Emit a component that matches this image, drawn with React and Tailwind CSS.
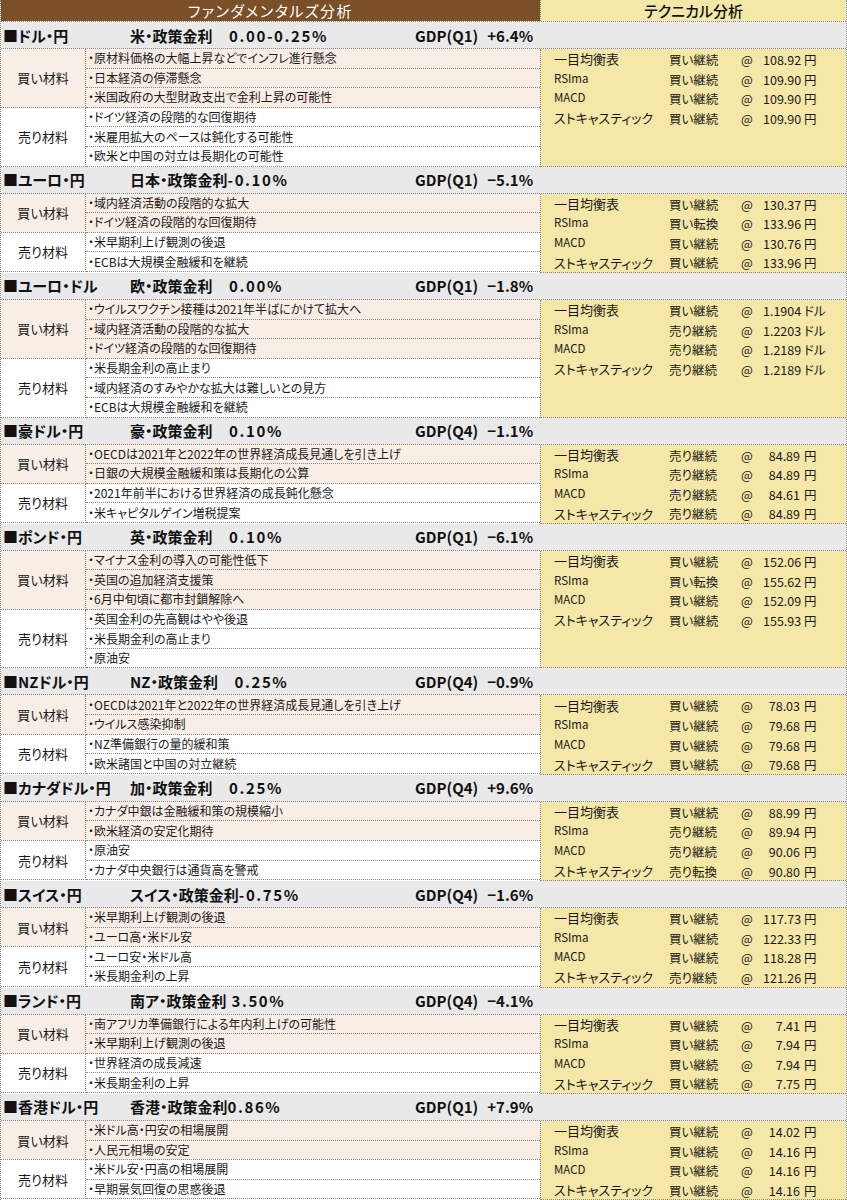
// SECTION: 為替 ファンダメンタルズ / テクニカル分析 表
const sections = [
  {
    pair: "■ドル・円",
    rate: "米・政策金利　0.00-0.25%",
    gdp: "GDP(Q1)　+6.4%",
    buy: ["・原材料価格の大幅上昇などでインフレ進行懸念", "・日本経済の停滞懸念", "・米国政府の大型財政支出で金利上昇の可能性"],
    sell: ["・ドイツ経済の段階的な回復期待", "・米雇用拡大のペースは鈍化する可能性", "・欧米と中国の対立は長期化の可能性"],
    unit: "円",
    tech: [["買い継続", "108.92"], ["買い継続", "109.90"], ["買い継続", "109.90"], ["買い継続", "109.90"]],
  },
  {
    pair: "■ユーロ・円",
    rate: "日本・政策金利-0.10%",
    gdp: "GDP(Q1)　−5.1%",
    buy: ["・域内経済活動の段階的な拡大", "・ドイツ経済の段階的な回復期待"],
    sell: ["・米早期利上げ観測の後退", "・ECBは大規模金融緩和を継続"],
    unit: "円",
    tech: [["買い継続", "130.37"], ["買い転換", "133.96"], ["買い継続", "130.76"], ["買い継続", "133.96"]],
  },
  {
    pair: "■ユーロ・ドル",
    rate: "欧・政策金利　0.00%",
    gdp: "GDP(Q1)　−1.8%",
    buy: ["・ウイルスワクチン接種は2021年半ばにかけて拡大へ", "・域内経済活動の段階的な拡大", "・ドイツ経済の段階的な回復期待"],
    sell: ["・米長期金利の高止まり", "・域内経済のすみやかな拡大は難しいとの見方", "・ECBは大規模金融緩和を継続"],
    unit: "ドル",
    tech: [["買い継続", "1.1904"], ["売り継続", "1.2203"], ["売り継続", "1.2189"], ["売り継続", "1.2189"]],
  },
  {
    pair: "■豪ドル・円",
    rate: "豪・政策金利　0.10%",
    gdp: "GDP(Q4)　−1.1%",
    buy: ["・OECDは2021年と2022年の世界経済成長見通しを引き上げ", "・日銀の大規模金融緩和策は長期化の公算"],
    sell: ["・2021年前半における世界経済の成長鈍化懸念", "・米キャピタルゲイン増税提案"],
    unit: "円",
    tech: [["売り継続", "84.89"], ["売り継続", "84.89"], ["売り継続", "84.61"], ["売り継続", "84.89"]],
  },
  {
    pair: "■ポンド・円",
    rate: "英・政策金利　0.10%",
    gdp: "GDP(Q1)　−6.1%",
    buy: ["・マイナス金利の導入の可能性低下", "・英国の追加経済支援策", "・6月中旬頃に都市封鎖解除へ"],
    sell: ["・英国金利の先高観はやや後退", "・米長期金利の高止まり", "・原油安"],
    unit: "円",
    tech: [["買い継続", "152.06"], ["買い転換", "155.62"], ["買い継続", "152.09"], ["買い継続", "155.93"]],
  },
  {
    pair: "■NZドル・円",
    rate: "NZ・政策金利　0.25%",
    gdp: "GDP(Q4)　−0.9%",
    buy: ["・OECDは2021年と2022年の世界経済成長見通しを引き上げ", "・ウイルス感染抑制"],
    sell: ["・NZ準備銀行の量的緩和策", "・欧米諸国と中国の対立継続"],
    unit: "円",
    tech: [["買い継続", "78.03"], ["買い継続", "79.68"], ["買い継続", "79.68"], ["買い継続", "79.68"]],
  },
  {
    pair: "■カナダドル・円",
    rate: "加・政策金利　0.25%",
    gdp: "GDP(Q4)　+9.6%",
    buy: ["・カナダ中銀は金融緩和策の規模縮小", "・欧米経済の安定化期待"],
    sell: ["・原油安", "・カナダ中央銀行は通貨高を警戒"],
    unit: "円",
    tech: [["買い継続", "88.99"], ["売り継続", "89.94"], ["売り継続", "90.06"], ["売り転換", "90.80"]],
  },
  {
    pair: "■スイス・円",
    rate: "スイス・政策金利-0.75%",
    gdp: "GDP(Q4)　−1.6%",
    buy: ["・米早期利上げ観測の後退", "・ユーロ高・米ドル安"],
    sell: ["・ユーロ安・米ドル高", "・米長期金利の上昇"],
    unit: "円",
    tech: [["買い継続", "117.73"], ["買い継続", "122.33"], ["買い継続", "118.28"], ["売り継続", "121.26"]],
  },
  {
    pair: "■ランド・円",
    rate: "南ア・政策金利 3.50%",
    gdp: "GDP(Q4)　−4.1%",
    buy: ["・南アフリカ準備銀行による年内利上げの可能性", "・米早期利上げ観測の後退"],
    sell: ["・世界経済の成長減速", "・米長期金利の上昇"],
    unit: "円",
    tech: [["買い継続", "7.41"], ["買い継続", "7.94"], ["買い継続", "7.94"], ["買い継続", "7.75"]],
  },
  {
    pair: "■香港ドル・円",
    rate: "香港・政策金利0.86%",
    gdp: "GDP(Q1)　+7.9%",
    buy: ["・米ドル高・円安の相場展開", "・人民元相場の安定"],
    sell: ["・米ドル安・円高の相場展開", "・早期景気回復の思惑後退"],
    unit: "円",
    tech: [["買い継続", "14.02"], ["買い継続", "14.16"], ["買い継続", "14.16"], ["買い継続", "14.16"]],
  },
];

const techNames = ["一目均衡表", "RSIma", "MACD", "ストキャスティック"];

function Group({ label, items, shaded }) {
  return (
    <div className={`flex ${shaded ? "bg-[#f8eee6]" : "bg-white"}`}>
      <div className="w-[85px] shrink-0 flex items-center justify-center text-[13px] border-r border-b border-dotted border-[#8a8a8a]">
        {label}
      </div>
      <div className="flex-1 flex flex-col">
        {items.map((t, i) => (
          <div
            key={i}
            className="h-[19.6px] flex items-center pl-[2px] text-[12px] border-b border-dotted border-[#8a8a8a] whitespace-nowrap overflow-hidden"
          >
            {t}
          </div>
        ))}
      </div>
    </div>
  );
}

function Section({ s }) {
  // split "米・政策金利　0.00-0.25%" into label and the numbers
  const m = s.rate.match(/^(.*?金利)(.*)$/);
  const gm = s.gdp.split("　");
  return (
    <div>
      {/* pair header */}
      <div className="h-[27px] flex items-center bg-[#e9e9e9] border-b border-dotted border-[#8a8a8a] text-[15px] font-bold text-[#111] whitespace-nowrap">
        <span className="w-[129px] pl-[2px]">{s.pair}</span>
        <span className="w-[285px]">
          {m[1]}
          <span className="tracking-[1.6px]">{m[2]}</span>
        </span>
        <span>{gm[0]}</span>
        <span className="ml-[9px]">{gm[1]}</span>
      </div>
      <div className="flex">
        <div className="w-[539px] shrink-0">
          <Group label="買い材料" items={s.buy} shaded />
          <Group label="売り材料" items={s.sell} />
        </div>
        {/* technical panel */}
        <div className="flex-1 bg-[#f4e7a7] border-l border-b border-dotted border-[#8a8a8a]">
          {s.tech.map(([sig, val], i) => (
            <div key={i} className="h-[19.6px] flex items-center text-[12.5px] whitespace-nowrap">
              <span className={`w-[128px] pl-[13px] ${i === 1 || i === 2 ? "text-[11.5px]" : "text-[13px]"}`}>
                {techNames[i]}
              </span>
              <span className="w-[72px] pt-[3px]">{sig}</span>
              <span className="w-[22px] pt-[3px]">@</span>
              <span className="w-[37px] text-right pt-[3px]">{val}</span>
              <span className="ml-[4px] pt-[3px]">{s.unit}</span>
            </div>
          ))}
        </div>
      </div>
    </div>
  );
}

export default function App() {
  return (
    <main className="w-[847px] bg-white text-[#1a1a1a] font-['Noto_Sans_CJK_JP','Liberation_Sans',sans-serif] [font-feature-settings:'palt'] leading-none border-l border-r border-dotted border-[#8a8a8a]">
      {/* top titles */}
      <div className="flex h-[22px] border-b border-dotted border-[#8a8a8a]">
        <div className="w-[539px] shrink-0 bg-[#7b4f27] text-white text-[15px] tracking-[1.5px] flex items-center justify-center">
          ファンダメンタルズ分析
        </div>
        <div className="flex-1 bg-[#f4e8a9] border-l border-dotted border-[#8a8a8a] text-[15px] text-[#111] font-medium flex items-center justify-center">
          テクニカル分析
        </div>
      </div>
      {sections.map((s, i) => (
        <Section key={i} s={s} />
      ))}
    </main>
  );
}
